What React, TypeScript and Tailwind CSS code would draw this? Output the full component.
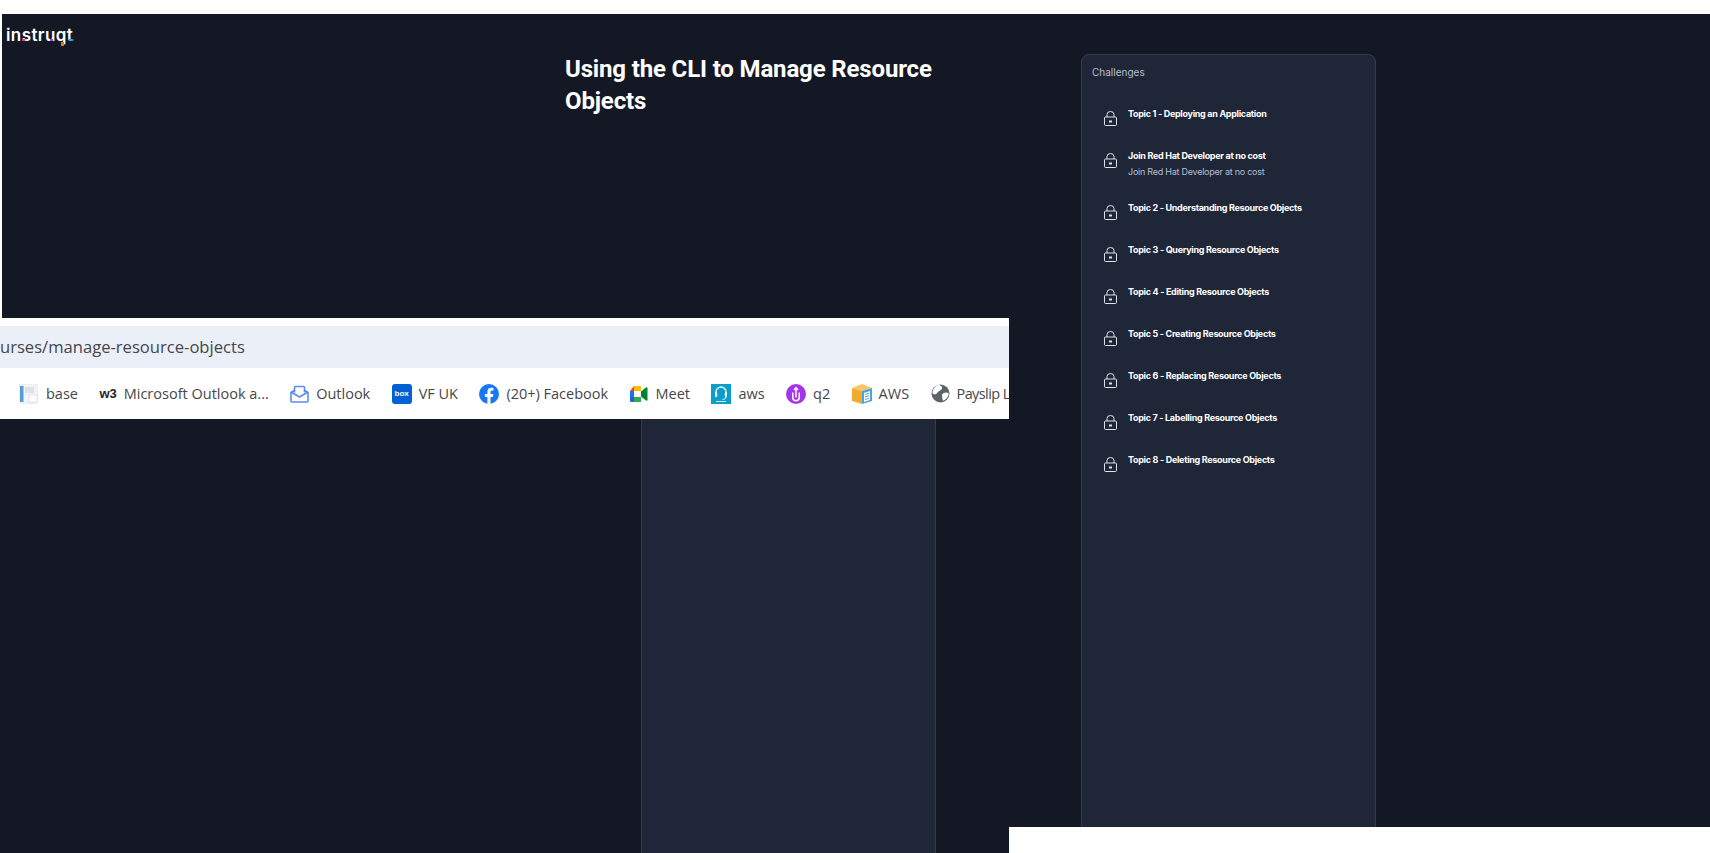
const topics = [
  { title: "Topic 1 - Deploying an Application" },
  { title: "Join Red Hat Developer at no cost", sub: "Join Red Hat Developer at no cost" },
  { title: "Topic 2 - Understanding Resource Objects" },
  { title: "Topic 3 - Querying Resource Objects" },
  { title: "Topic 4 - Editing Resource Objects" },
  { title: "Topic 5 - Creating Resource Objects" },
  { title: "Topic 6 - Replacing Resource Objects" },
  { title: "Topic 7 - Labelling Resource Objects" },
  { title: "Topic 8 - Deleting Resource Objects" },
];

const LockIcon = () => (
  <svg width="13" height="15" viewBox="0 0 13 15" fill="none" stroke="#dbe1ea" strokeWidth="1" className="mb-[-1px] mt-[4px] shrink-0">
    <rect x="0.5" y="6" width="12" height="8.5" rx="1" />
    <path d="M3 6V3.5a3.5 3 0 0 1 7 0V6" />
    <rect x="5" y="9.5" width="3" height="2" fill="#dbe1ea" stroke="none" />
  </svg>
);

const BaseIcon = () => (
  <svg width="20" height="20" viewBox="0 0 20 20">
    <rect x="0.5" y="0.5" width="18" height="19" fill="#f1f3f5" stroke="#dfe3e8" strokeWidth="0.5" />
    <rect x="1" y="2" width="3.5" height="16" fill="#5b9bd5" />
    <rect x="6" y="3" width="9" height="6" fill="#dfe3e8" />
    <rect x="10" y="11" width="8" height="7" fill="#fff" stroke="#cfd4da" strokeWidth="0.6" />
  </svg>
);

const OutlookIcon = () => (
  <svg width="19" height="18" viewBox="0 0 19 18" fill="none" stroke="#5b8def" strokeWidth="1.6">
    <path d="M1 7.5 5 5M18 7.5 14 5" />
    <path d="M1 7v9a1 1 0 0 0 1 1h15a1 1 0 0 0 1-1V7" />
    <path d="M1 7l8.5 5L18 7" />
    <path d="M4.5 7.5V2.5a1 1 0 0 1 1-1h8a1 1 0 0 1 1 1v5" />
  </svg>
);

const BoxIcon = () => (
  <div className="flex h-[20px] w-[20px] items-center justify-center rounded-[3px] bg-[#0061d5] font-['Liberation_Sans',sans-serif] text-[8px] font-bold text-white">
    box
  </div>
);

const FacebookIcon = () => (
  <svg width="20" height="20" viewBox="0 0 20 20">
    <circle cx="10" cy="10" r="10" fill="#1877f2" />
    <path d="M13.9 12.9l.45-2.9h-2.8V8.1c0-.8.4-1.6 1.6-1.6h1.3V4c0 0-1.15-.2-2.25-.2-2.3 0-3.8 1.4-3.8 3.9V10H5.9v2.9h2.5V20h3.1v-7.1z" fill="#fff" />
  </svg>
);

const MeetIcon = () => (
  <svg width="19" height="16" viewBox="0 0 19 16">
    <path d="M4 0h7v5H4z" fill="#fbbc04" />
    <path d="M4 0v5H0z" fill="#ea4335" />
    <path d="M0 5h4v6H0z" fill="#1a73e8" />
    <path d="M0 11h4v5H1.5A1.5 1.5 0 0 1 0 14.5z" fill="#1967d2" />
    <path d="M4 11h7v5H4z" fill="#34a853" />
    <path d="M11 5.5l5-4c.6-.5 1.5-.1 1.5.7v11.6c0 .8-.9 1.2-1.5.7l-5-4z" fill="#00832d" />
    <path d="M4 5h7v6H4z" fill="#fff" />
  </svg>
);

const AwsHeadsetIcon = () => (
  <svg width="20" height="20" viewBox="0 0 20 20">
    <rect width="20" height="20" fill="#0c9ecb" />
    <path d="M5 9V8a5 5 0 0 1 10 0v1" fill="none" stroke="#fff" strokeWidth="1.3" />
    <rect x="4" y="8" width="2.2" height="5" rx="1" fill="#fff" />
    <rect x="13.8" y="8" width="2.2" height="5" rx="1" fill="#fff" />
    <path d="M15 13c0 1.8-1.8 2.3-3.5 2.3" fill="none" stroke="#fff" strokeWidth="1" />
    <rect x="5" y="17" width="10" height="1" fill="#cfeaf4" />
  </svg>
);

const ClipIcon = () => (
  <svg width="20" height="20" viewBox="0 0 20 20">
    <circle cx="10" cy="10" r="10" fill="#a334ea" />
    <path d="M6.8 8.5v5a3.2 3.2 0 0 0 6.4 0v-5" fill="none" stroke="#fff" strokeWidth="1.5" />
    <path d="M10 5v8.5" stroke="#fff" strokeWidth="1.5" />
    <path d="M8 6l2-2.5L12 6" fill="none" stroke="#fff" strokeWidth="1.3" />
  </svg>
);

const AwsBoxIcon = () => (
  <svg width="20" height="20" viewBox="0 0 20 20">
    <path d="M0 4l10-4 10 4-10 3z" fill="#f7c765" />
    <path d="M0 4l10 3v13L0 17z" fill="#f3ab2e" />
    <path d="M10 7l10-3v13l-10 3z" fill="#4ba3d9" />
    <path d="M12 9l6-2v9l-6 2z" fill="#fff" />
    <path d="M13 10.5l4-1.2M13 13l4-1.2M13 15.5l4-1.2" stroke="#4ba3d9" strokeWidth="1" />
  </svg>
);

const GlobeIcon = () => (
  <svg width="19" height="19" viewBox="0 0 19 19">
    <circle cx="9.5" cy="9.5" r="9" fill="#5f6368" />
    <path d="M8 .8c2 1 3.5 2 3 3.700S8 6.500 6.500 8.500 4 11 1.500 9.500C1.500 5.500 4 1.800 8 .8zM13 9c2-1 3.500-.5 4.800.5-.3 3-2.300 6-5.800 7.300-1-2-.5-3.500-1-5s.5-2 2-2.800z" fill="#fff" />
  </svg>
);

const bookmarks = [
  { icon: <BaseIcon />, label: "base", cls: "" },
  { icon: <span className="font-['Liberation_Sans',sans-serif] text-[13px] font-bold text-[#222]">w3</span>, label: "Microsoft Outlook a...", cls: "" },
  { icon: <OutlookIcon />, label: "Outlook", cls: "" },
  { icon: <BoxIcon />, label: "VF UK", cls: "" },
  { icon: <FacebookIcon />, label: "(20+) Facebook", cls: "" },
  { icon: <MeetIcon />, label: "Meet", cls: "" },
  { icon: <AwsHeadsetIcon />, label: "aws", cls: "" },
  { icon: <ClipIcon />, label: "q2", cls: "" },
  { icon: <AwsBoxIcon />, label: "AWS", cls: "" },
  { icon: <GlobeIcon />, label: "Payslip L", cls: "tracking-[-0.6px]" },
];

const Logo = () => (
  <div className="relative inline-block font-['Inter',sans-serif] text-[17px] font-semibold leading-[18px] tracking-[0.4px] text-white">
    instruqt
    <span className="absolute left-[16px] top-[13px] h-[2px] w-[3px] bg-[#e0338f]" />
    <span className="absolute left-[44px] top-[13px] h-[2px] w-[3px] bg-[#8a4fd8]" />
    <span className="absolute left-[55px] top-[16px] h-[4px] w-[3px] bg-[#e8791c]" />
    <span className="absolute left-[63px] top-[13px] h-[2px] w-[4px] bg-[#12b5d6]" />
  </div>
);

export default function App() {
  return (
    <div className="relative h-screen overflow-hidden bg-white pt-[14px]">
      <main className="flex h-[839px] bg-[#141824] font-['Inter',sans-serif]">
        <div className="w-[565px] shrink-0 pl-[6px] pt-[9px]">
          <Logo />
        </div>
        <div className="flex w-[516px] shrink-0 flex-col pt-[39px]">
          <h1 className="w-[380px] font-['Roboto',sans-serif] text-[24px] font-bold leading-[32px] tracking-[-0.15px] text-white">
            Using the CLI to Manage Resource Objects
          </h1>
          <div className="ml-[76px] mt-[250px] w-[295px] flex-1 border-x border-[#343d50] bg-[#1f2637]" />
        </div>
        <aside className="mt-[40px] h-full w-[295px] rounded-t-lg border border-[#343d50] bg-[#1f2637] pl-[10px] pt-[11px]">
          <p className="text-[10px] leading-[12px] text-[#b4bfd0]">Challenges</p>
          <ul className="mt-[29px] pl-[12px]">
            {topics.map((t) => (
              <li key={t.title} className="flex gap-[11px] pb-[24px]">
                <LockIcon />
                <div>
                  <p className="text-[9px] font-bold leading-[14px] tracking-[-0.3px] text-white">{t.title}</p>
                  {t.sub && <p className="mt-[4px] text-[9px] leading-[10px] tracking-[-0.25px] text-[#b4bfd0]">{t.sub}</p>}
                </div>
              </li>
            ))}
          </ul>
        </aside>
      </main>

      <div className="absolute left-0 top-0 h-[318px] w-[2px] bg-white" />

      <div className="absolute left-0 top-[318px] h-[101px] w-[1009px] overflow-hidden bg-white pt-[8px] font-['Open_Sans',sans-serif] text-[#45474a]">
        <div className="flex h-[42px] items-center bg-[#ebeff8] text-[16.6px]">urses/manage-resource-objects</div>
        <div className="flex h-[51px] items-center gap-[21.4px] whitespace-nowrap pl-[19px] text-[14.5px]">
          {bookmarks.map((b) => (
            <div key={b.label} className="flex items-center gap-[7px]">
              {b.icon}
              <span className={b.cls}>{b.label}</span>
            </div>
          ))}
        </div>
      </div>

      <div className="absolute bottom-0 left-[1009px] right-0 h-[26px] bg-white" />
    </div>
  );
}
